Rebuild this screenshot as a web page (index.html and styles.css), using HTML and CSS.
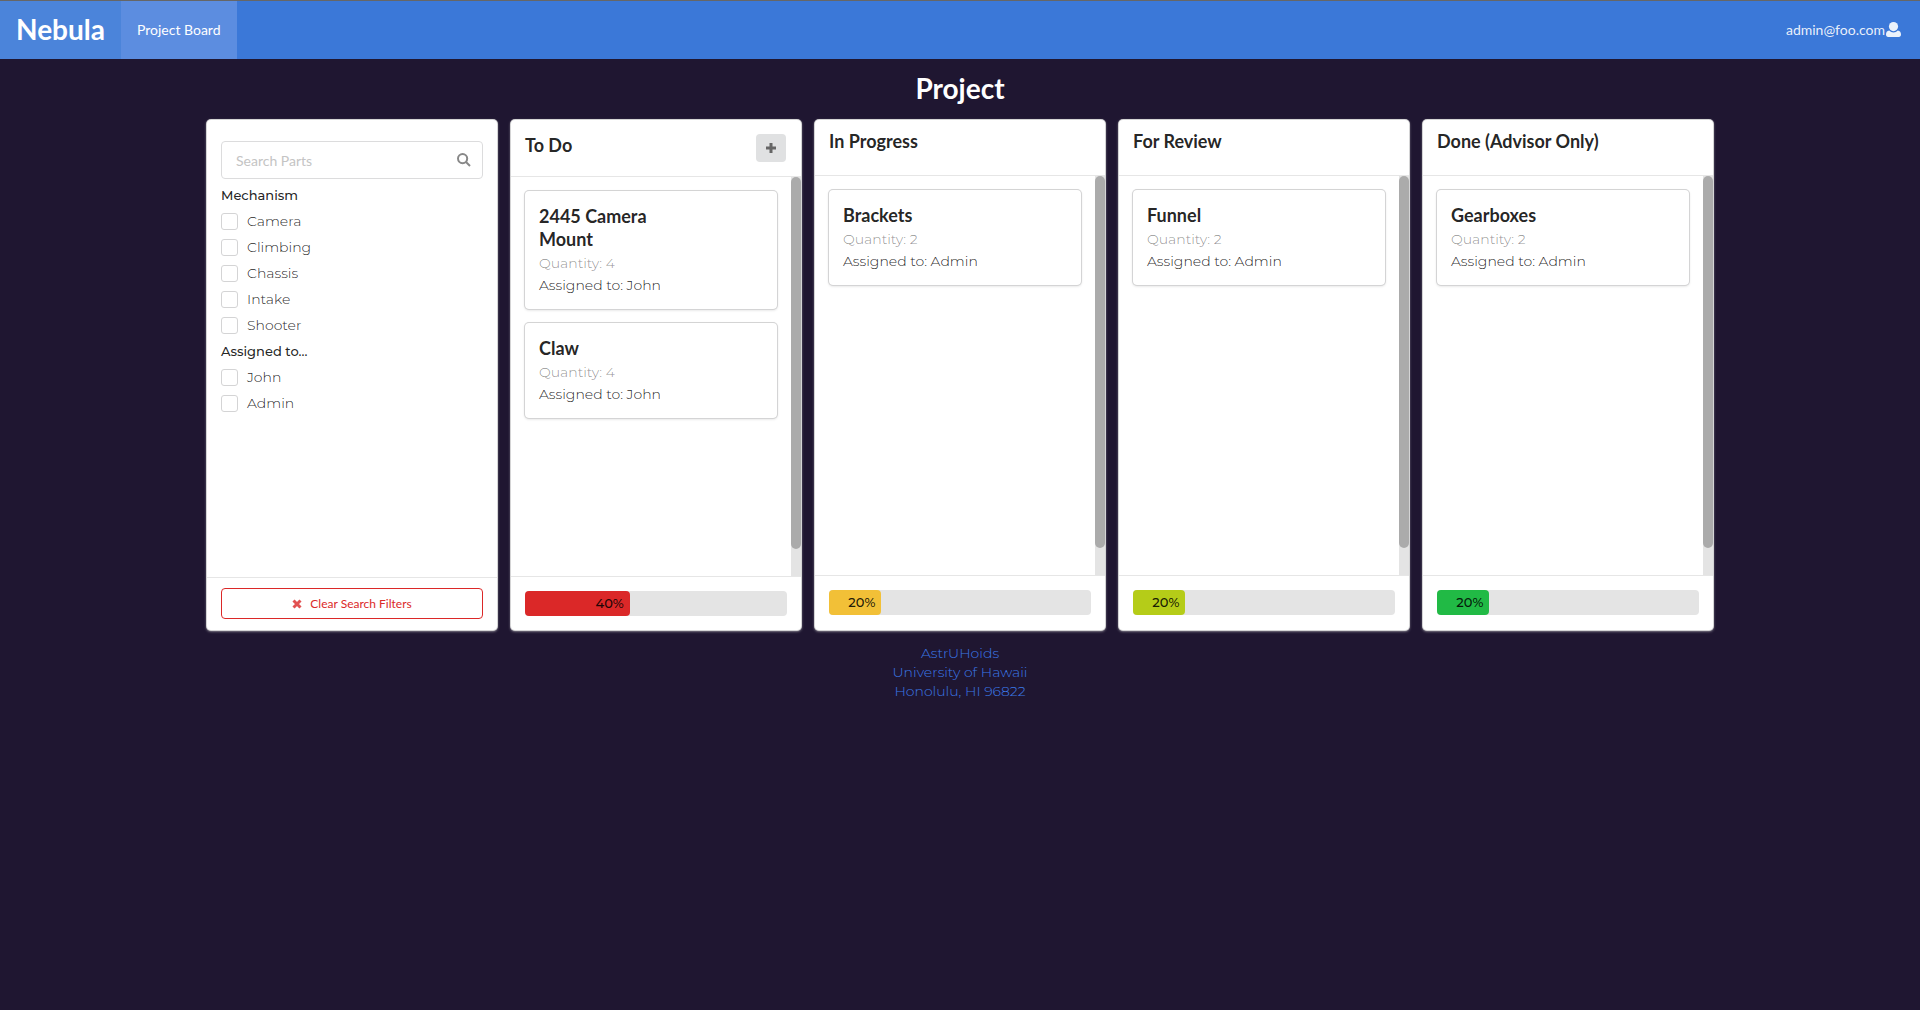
FILE: index.html
```html
<!DOCTYPE html>
<html lang="en">
<head>
<meta charset="utf-8">
<meta name="viewport" content="width=device-width, initial-scale=1">
<title>Nebula</title>
<link rel="stylesheet" href="styles.css">
</head>
<body>
<nav class="menu">
  <a class="menu-item brand" href="#">Nebula</a>
  <a class="menu-item active" href="#">Project Board</a>
  <a class="menu-item account" href="#">admin@foo.com<svg class="user-icon" viewBox="0 0 15 15" aria-hidden="true"><circle cx="7.5" cy="4.6" r="4.6"/><path d="M3.200 8.600C1 9 0 10.400 0 12.600c0 1.600.8 2.400 2.200 2.400h10.600c1.400 0 2.200-.8 2.200-2.400 0-2.200-1-3.600-3.200-4a5.800 5.800 0 0 1-8.600 0z"/></svg></a>
</nav>

<main class="page">
  <h1 class="page-title">Project</h1>
  <div class="board">
    <section class="column" aria-label="Filters">
      <div class="filters">
        <div class="search">
          <input class="search-input" type="text" placeholder="Search Parts" aria-label="Search Parts">
          <svg class="search-icon" viewBox="0 0 14 14" aria-hidden="true"><circle cx="5.600" cy="5.600" r="4.600"/><path d="M9 9l4 4"/></svg>
        </div>
        <fieldset class="filter-group">
          <legend class="filter-title">Mechanism</legend>
          <label class="filter"><input type="checkbox">Camera</label>
          <label class="filter"><input type="checkbox">Climbing</label>
          <label class="filter"><input type="checkbox">Chassis</label>
          <label class="filter"><input type="checkbox">Intake</label>
          <label class="filter"><input type="checkbox">Shooter</label>
        </fieldset>
        <fieldset class="filter-group">
          <legend class="filter-title">Assigned to...</legend>
          <label class="filter"><input type="checkbox">John</label>
          <label class="filter"><input type="checkbox">Admin</label>
        </fieldset>
      </div>
      <div class="column-footer compact">
        <button class="clear-button" type="button"><svg class="clear-icon" viewBox="0 0 10 10" aria-hidden="true"><path d="M1.500 1.500l7 7M8.500 1.500l-7 7"/></svg>Clear Search Filters</button>
      </div>
    </section>

    <section class="column">
      <header class="column-header with-action">
        <h2 class="column-title">To Do</h2>
        <button class="add-button" type="button" aria-label="Add part"><svg class="add-icon" viewBox="0 0 10 10" aria-hidden="true"><path d="M5 0v10M0 5h10"/></svg></button>
      </header>
      <div class="column-body">
        <div class="parts">
          <article class="part">
            <h3 class="part-name">2445 Camera Mount</h3>
            <p class="part-meta">Quantity: 4</p>
            <p class="part-owner">Assigned to: John</p>
          </article>
          <article class="part">
            <h3 class="part-name">Claw</h3>
            <p class="part-meta">Quantity: 4</p>
            <p class="part-owner">Assigned to: John</p>
          </article>
        </div>
        <div class="scroll-track"><div class="scroll-thumb"></div></div>
      </div>
      <div class="column-footer">
        <div class="progress"><div class="bar red" style="width:40%">40%</div></div>
      </div>
    </section>

    <section class="column">
      <header class="column-header">
        <h2 class="column-title">In Progress</h2>
      </header>
      <div class="column-body">
        <div class="parts">
          <article class="part">
            <h3 class="part-name">Brackets</h3>
            <p class="part-meta">Quantity: 2</p>
            <p class="part-owner">Assigned to: Admin</p>
          </article>
        </div>
        <div class="scroll-track"><div class="scroll-thumb"></div></div>
      </div>
      <div class="column-footer">
        <div class="progress"><div class="bar yellow" style="width:20%">20%</div></div>
      </div>
    </section>

    <section class="column">
      <header class="column-header">
        <h2 class="column-title">For Review</h2>
      </header>
      <div class="column-body">
        <div class="parts">
          <article class="part">
            <h3 class="part-name">Funnel</h3>
            <p class="part-meta">Quantity: 2</p>
            <p class="part-owner">Assigned to: Admin</p>
          </article>
        </div>
        <div class="scroll-track"><div class="scroll-thumb"></div></div>
      </div>
      <div class="column-footer">
        <div class="progress"><div class="bar olive" style="width:20%">20%</div></div>
      </div>
    </section>

    <section class="column">
      <header class="column-header">
        <h2 class="column-title">Done (Advisor Only)</h2>
      </header>
      <div class="column-body">
        <div class="parts">
          <article class="part">
            <h3 class="part-name">Gearboxes</h3>
            <p class="part-meta">Quantity: 2</p>
            <p class="part-owner">Assigned to: Admin</p>
          </article>
        </div>
        <div class="scroll-track"><div class="scroll-thumb"></div></div>
      </div>
      <div class="column-footer">
        <div class="progress"><div class="bar green" style="width:20%">20%</div></div>
      </div>
    </section>
  </div>
</main>

<footer class="site-footer">AstrUHoids<br>University of Hawaii<br>Honolulu, HI 96822</footer>
</body>
</html>
```

FILE: styles.css
```css
* {
  box-sizing: border-box;
}

body {
  margin: 0;
  min-height: 100vh;
  background: #1f1631;
  color: rgba(0, 0, 0, 0.87);
  font-family: Montserrat, Inter, "Open Sans", sans-serif;
  font-size: 14px;
  font-weight: 300;
}

h1, h2, h3, p {
  margin: 0;
}

button, input {
  font-family: Lato, sans-serif;
}

/* Top menu */
.menu {
  display: flex;
  min-height: 59px;
  border-top: 1px solid #666;
  background: #3b78d8;
  font-family: Lato, sans-serif;
  font-size: 14px;
  font-weight: 400;
}

.menu-item {
  display: flex;
  align-items: center;
  padding: 0 16px 2px;
  color: #fff;
  text-decoration: none;
}

.brand {
  background: #4b84da;
  font-size: 28px;
  font-weight: 700;
}

.active {
  background: #5c8de0;
}

.account {
  margin-left: auto;
  padding-right: 19px;
  color: rgba(255, 255, 255, 0.9);
}

.user-icon {
  width: 15px;
  height: 15px;
  margin-left: 1px;
  fill: currentColor;
}

/* Board */
.page {
  padding: 11px 14px 14px;
}

.page-title {
  margin-bottom: 14px;
  color: #fff;
  font-family: Lato, sans-serif;
  font-size: 28px;
  font-weight: 700;
  line-height: 36px;
  text-align: center;
}

.board {
  display: grid;
  grid-template-columns: repeat(5, 1fr);
  gap: 14px;
  max-width: 1506px;
  margin: 0 auto;
}

.column {
  display: flex;
  flex-direction: column;
  overflow: hidden;
  border-radius: 4px;
  background: #fff;
  box-shadow: 0 1px 3px 0 #d4d4d5, 0 0 0 1px #d4d4d5;
}

.column-header {
  display: flex;
  justify-content: space-between;
  min-height: 56px;
  padding: 10px 15px 10px 14px;
  border-bottom: 1px solid #e6e6e6;
}

.column-header.with-action {
  padding-top: 14px;
  padding-bottom: 14px;
}

.column-title, .part-name {
  font-family: Lato, sans-serif;
  font-size: 18px;
  font-weight: 700;
}

.column-title {
  line-height: 22px;
}

.add-button {
  display: flex;
  align-items: center;
  justify-content: center;
  width: 30px;
  height: 28px;
  padding: 0;
  border: 0;
  border-radius: 4px;
  background: #e0e1e2;
}

.add-icon {
  width: 10px;
  height: 10px;
  stroke: #666;
  stroke-width: 3;
}

.column-body {
  display: flex;
  min-height: 399px;
}

.parts {
  display: flex;
  flex: 1;
  flex-direction: column;
  gap: 14px;
  padding: 14px;
}

.part {
  padding: 14px 14px 13px;
  border-radius: 4px;
  box-shadow: 0 1px 3px 0 #d4d4d5, 0 0 0 1px #d4d4d5;
}

.part-name {
  max-width: 160px;
  margin-bottom: 1px;
  line-height: 23px;
}

.part-meta, .part-owner {
  line-height: 22px;
}

.part-meta {
  color: rgba(0, 0, 0, 0.45);
}

.scroll-track {
  width: 10px;
  background: #e4e4e4;
}

.scroll-thumb {
  height: 372px;
  border-radius: 5px;
  background: #ababab;
}

.column-footer {
  flex: 1;
  padding: 14px;
  border-top: 1px solid #e6e6e6;
}

.column-footer.compact {
  flex: none;
  padding: 10px 14px 11px;
}

.progress {
  border-radius: 4px;
  background: #e4e4e4;
}

.bar {
  padding-right: 6px;
  border-radius: 4px;
  font-size: 13px;
  font-weight: 500;
  line-height: 25px;
  text-align: right;
}

.red { background: #db2828; }
.yellow { background: #f2c037; }
.olive { background: #b5cc18; }
.green { background: #21ba45; }

/* Filters */
.filters {
  flex: 1;
  padding: 21px 14px;
}

.search {
  display: flex;
  align-items: center;
  height: 38px;
  margin-bottom: 3px;
  padding: 0 11px 0 14px;
  border: 1px solid #dcdcdd;
  border-radius: 4px;
}

.search-input {
  flex: 1;
  min-width: 0;
  padding: 0;
  border: 0;
  outline: 0;
  background: none;
  font-size: 14px;
}

.search-input::placeholder {
  color: #c4c4c4;
}

.search-icon {
  width: 14px;
  height: 14px;
  fill: none;
  stroke: #888;
  stroke-width: 2;
}

.filter-group {
  margin: 0;
  padding: 0;
  border: 0;
}

.filter-title {
  padding: 0;
  font-size: 13px;
  font-weight: 500;
  line-height: 26px;
}

.filter {
  display: flex;
  align-items: center;
  gap: 9px;
  line-height: 26px;
}

.filter input {
  width: 17px;
  height: 17px;
  margin: 0;
  border: 1px solid #d4d4d5;
  border-radius: 3px;
  background: #fff;
  appearance: none;
}

.filter input:checked {
  background: #3b78d8;
}

.clear-button {
  display: flex;
  align-items: center;
  justify-content: center;
  gap: 8px;
  width: 100%;
  height: 31px;
  border: 1px solid #db2828;
  border-radius: 4px;
  background: #fff;
  color: #db2828;
  font-size: 12px;
}

.clear-icon {
  width: 10px;
  height: 10px;
  opacity: 0.8;
  stroke: #db2828;
  stroke-width: 3;
}

.site-footer {
  padding-bottom: 14px;
  color: #3b78e8;
  line-height: 19px;
  text-align: center;
}
```
